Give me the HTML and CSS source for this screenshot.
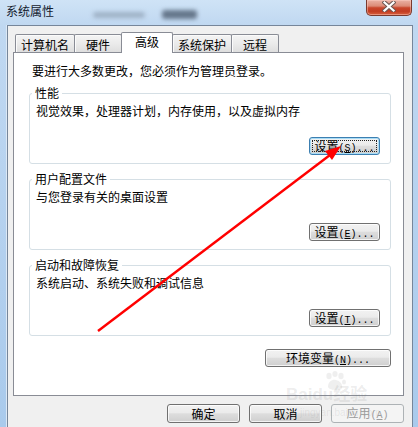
FILE: index.html
```html
<!DOCTYPE html>
<html lang="zh-CN">
<head>
<meta charset="utf-8">
<title>系统属性</title>
<link rel="stylesheet" href="styles.css">
</head>
<body>
<div class="window">
  <div class="titlebar">
    <span class="title">系统属性</span>
    <span class="ghost g1"></span>
    <span class="ghost g2"></span>
    <span class="close" aria-label="关闭">
      <svg width="14" height="11" viewBox="0 0 14 11"><path d="M2.5 1.5 L11.5 9.5 M11.5 1.5 L2.5 9.5" stroke="#6b5652" stroke-width="4.2" stroke-linecap="square" fill="none"/><path d="M2.5 1.5 L11.5 9.5 M11.5 1.5 L2.5 9.5" stroke="#ffffff" stroke-width="2.2" stroke-linecap="square" fill="none"/></svg>
    </span>
  </div>
  <div class="frame">
    <div class="client">
      <div class="tabs">
        <div class="tab">计算机名</div>
        <div class="tab">硬件</div>
        <div class="tab active">高级</div>
        <div class="tab">系统保护</div>
        <div class="tab">远程</div>
      </div>
      <div class="panel">
        <p class="intro">要进行大多数更改，您必须作为管理员登录。</p>
        <fieldset class="group">
          <legend>性能</legend>
          <p>视觉效果，处理器计划，内存使用，以及虚拟内存</p>
          <div class="actions"><button class="btn focus">设置<span class="key">(<u>S</u>)...</span></button></div>
        </fieldset>
        <fieldset class="group">
          <legend>用户配置文件</legend>
          <p>与您登录有关的桌面设置</p>
          <div class="actions"><button class="btn">设置<span class="key">(<u>E</u>)...</span></button></div>
        </fieldset>
        <fieldset class="group">
          <legend>启动和故障恢复</legend>
          <p>系统启动、系统失败和调试信息</p>
          <div class="actions"><button class="btn">设置<span class="key">(<u>T</u>)...</span></button></div>
        </fieldset>
        <div class="actions env"><button class="btn wide">环境变量<span class="key">(<u>N</u>)...</span></button></div>
      </div>
      <div class="footer">
        <button class="btn">确定</button>
        <button class="btn">取消</button>
        <button class="btn" disabled>应用<span class="key">(<u>A</u>)</span></button>
      </div>
    </div>
  </div>
  <svg class="arrow" width="418" height="427" viewBox="0 0 418 427">
    <line x1="98" y1="331" x2="330" y2="155" stroke="#ff0000" stroke-width="2.4"/>
    <polygon points="341,146 332,160 325,151" fill="#ff0000"/>
  </svg>
  <div class="watermark">
    <svg class="paw" width="22" height="20" viewBox="0 0 22 20"><ellipse cx="5" cy="5" rx="2.6" ry="3.2"/><ellipse cx="11" cy="3" rx="2.6" ry="3"/><ellipse cx="17" cy="5" rx="2.6" ry="3.2"/><ellipse cx="20" cy="11" rx="2" ry="2.6"/><path d="M4 16 C4 10 9 8 12 9 C16 10 19 13 18 17 C17 20 6 20 4 16 Z"/></svg>
    <span class="wm-text">Baidu经验</span>
    <span class="wm-url">jingyan.baidu.com</span>
  </div>
</div>
</body>
</html>
```
FILE: styles.css
```css
* { box-sizing: border-box; }
html, body { margin: 0; padding: 0; }
body {
  width: 418px;
  height: 427px;
  overflow: hidden;
  font-family: "Noto Sans CJK SC", "Noto Sans", sans-serif;
  font-size: 12px;
  color: #000;
}
.window {
  position: relative;
  width: 418px;
  height: 427px;
  display: flex;
  flex-direction: column;
  overflow: hidden;
  background: linear-gradient(180deg, #cfe3f6 0px, #c0d8f1 25px, #b6d2ef 200px, #a9caec 427px);
}
.titlebar {
  flex: none;
  height: 25px;
  display: flex;
  align-items: flex-start;
}
.title {
  padding: 4px 0 0 6px;
  line-height: 14px;
  color: #14202e;
}
.ghost {
  border-radius: 3px;
  filter: blur(2px);
}
.g1 { width: 52px; height: 6px; margin: 12px 0 0 39px; background: #9fb2c6; }
.g2 { width: 35px; height: 9px; margin: 10px 0 0 17px; background: #66778b; }
.close {
  margin-left: auto;
  margin-right: 6px;
  width: 46px;
  height: 16px;
  display: flex;
  justify-content: center;
  padding-top: 1px;
  border: 1px solid #7a3a2e;
  border-top: 0;
  border-radius: 0 0 5px 5px;
  background: linear-gradient(180deg, #eab2a6 0%, #dc8c78 40%, #c9472d 52%, #c23c22 75%, #d8613f 100%);
  box-shadow: inset 0 0 0 1px rgba(255, 210, 200, 0.45);
}
.frame {
  flex: 1;
  min-height: 0;
  display: flex;
  padding: 0 5px 0 7px;
}
.client {
  flex: 1;
  display: flex;
  flex-direction: column;
  background: #f0f0f0;
  border: 1px solid #76869a;
  border-bottom: 0;
  padding: 0 8px 0 5px;
  box-shadow: -1px 0 0 #dbe8f6;
}
.tabs {
  flex: none;
  height: 26px;
  display: flex;
  align-items: flex-end;
  padding-left: 2px;
}
.tab {
  height: 18px;
  min-width: 48px;
  padding: 2px 5px 0;
  line-height: 15px;
  text-align: center;
  border: 1px solid #898c95;
  border-bottom: 0;
  border-radius: 2px 2px 0 0;
  margin-right: -1px;
  background: linear-gradient(180deg, #f4f4f4 0%, #ebebeb 50%, #dedede 100%);
  box-shadow: inset 1px 1px 0 #fbfbfb;
}
.tab.active {
  height: 21px;
  min-width: 52px;
  padding: 1px 5px 4px;
  line-height: 16px;
  margin-bottom: -1px;
  background: #ffffff;
  box-shadow: none;
  position: relative;
  z-index: 1;
}
.panel {
  flex: none;
  height: 344px;
  border: 1px solid #898c95;
  background: #ffffff;
  padding-top: 11px;
}
.intro {
  margin: 0 0 0 18px;
  line-height: 14px;
}
.group {
  margin: 8px 12px 0 15px;
  padding: 0 10px 8px 6px;
  border: 1px solid #d5dfe5;
  border-radius: 3px;
  min-width: 0;
}
.group legend {
  padding: 0 3px;
  margin-left: -4px;
  line-height: 14px;
}
.group p {
  margin: 4px 0 0;
  line-height: 14px;
}
.actions {
  display: flex;
  justify-content: flex-end;
  margin-top: 19px;
}
.actions.env {
  margin: 13px 12px 0 0;
}
.btn {
  font-family: "Noto Sans CJK SC", "Noto Sans", sans-serif;
  font-size: 12px;
  line-height: 16px;
  color: #000;
  width: 71px;
  height: 18px;
  padding: 0;
  border: 1px solid #707070;
  border-radius: 3px;
  background: linear-gradient(180deg, #f2f2f2 0%, #ebebeb 45%, #dddddd 52%, #cfcfcf 100%);
  box-shadow: inset 0 0 0 1px rgba(255, 255, 255, 0.75);
  text-align: center;
}
.btn.wide { width: 126px; }
.btn.focus {
  border-color: #3c7fb1;
  box-shadow: inset 0 0 0 1px #a9dcf6;
  outline: 1px dotted #222;
  outline-offset: -4px;
}
.key {
  font-family: "Liberation Mono", "DejaVu Sans Mono", monospace;
  font-size: 10px;
}
.footer {
  flex: none;
  display: flex;
  justify-content: flex-end;
  gap: 9px;
  padding-top: 8px;
}
.footer .btn {
  width: 73px;
  height: 19px;
}
.btn:disabled {
  color: #9c9c9c;
  border-color: #adb2b5;
  background: #f4f4f4;
  box-shadow: none;
}
.arrow {
  position: absolute;
  left: 0;
  top: 0;
  pointer-events: none;
}
.watermark {
  position: absolute;
  left: 286px;
  top: 369px;
  width: 110px;
  height: 52px;
  pointer-events: none;
}
.paw {
  position: absolute;
  left: 38px;
  top: 2px;
  fill: rgba(120, 120, 120, 0.12);
}
.wm-text {
  position: absolute;
  left: 0;
  top: 16px;
  font-family: "Liberation Sans", "Noto Sans CJK SC", sans-serif;
  font-weight: bold;
  font-size: 17px;
  line-height: 20px;
  color: rgba(120, 120, 120, 0.14);
  white-space: nowrap;
}
.wm-url {
  position: absolute;
  left: 14px;
  top: 38px;
  font-family: "Liberation Sans", sans-serif;
  font-size: 10px;
  line-height: 12px;
  color: rgba(120, 120, 120, 0.12);
  white-space: nowrap;
}
```
